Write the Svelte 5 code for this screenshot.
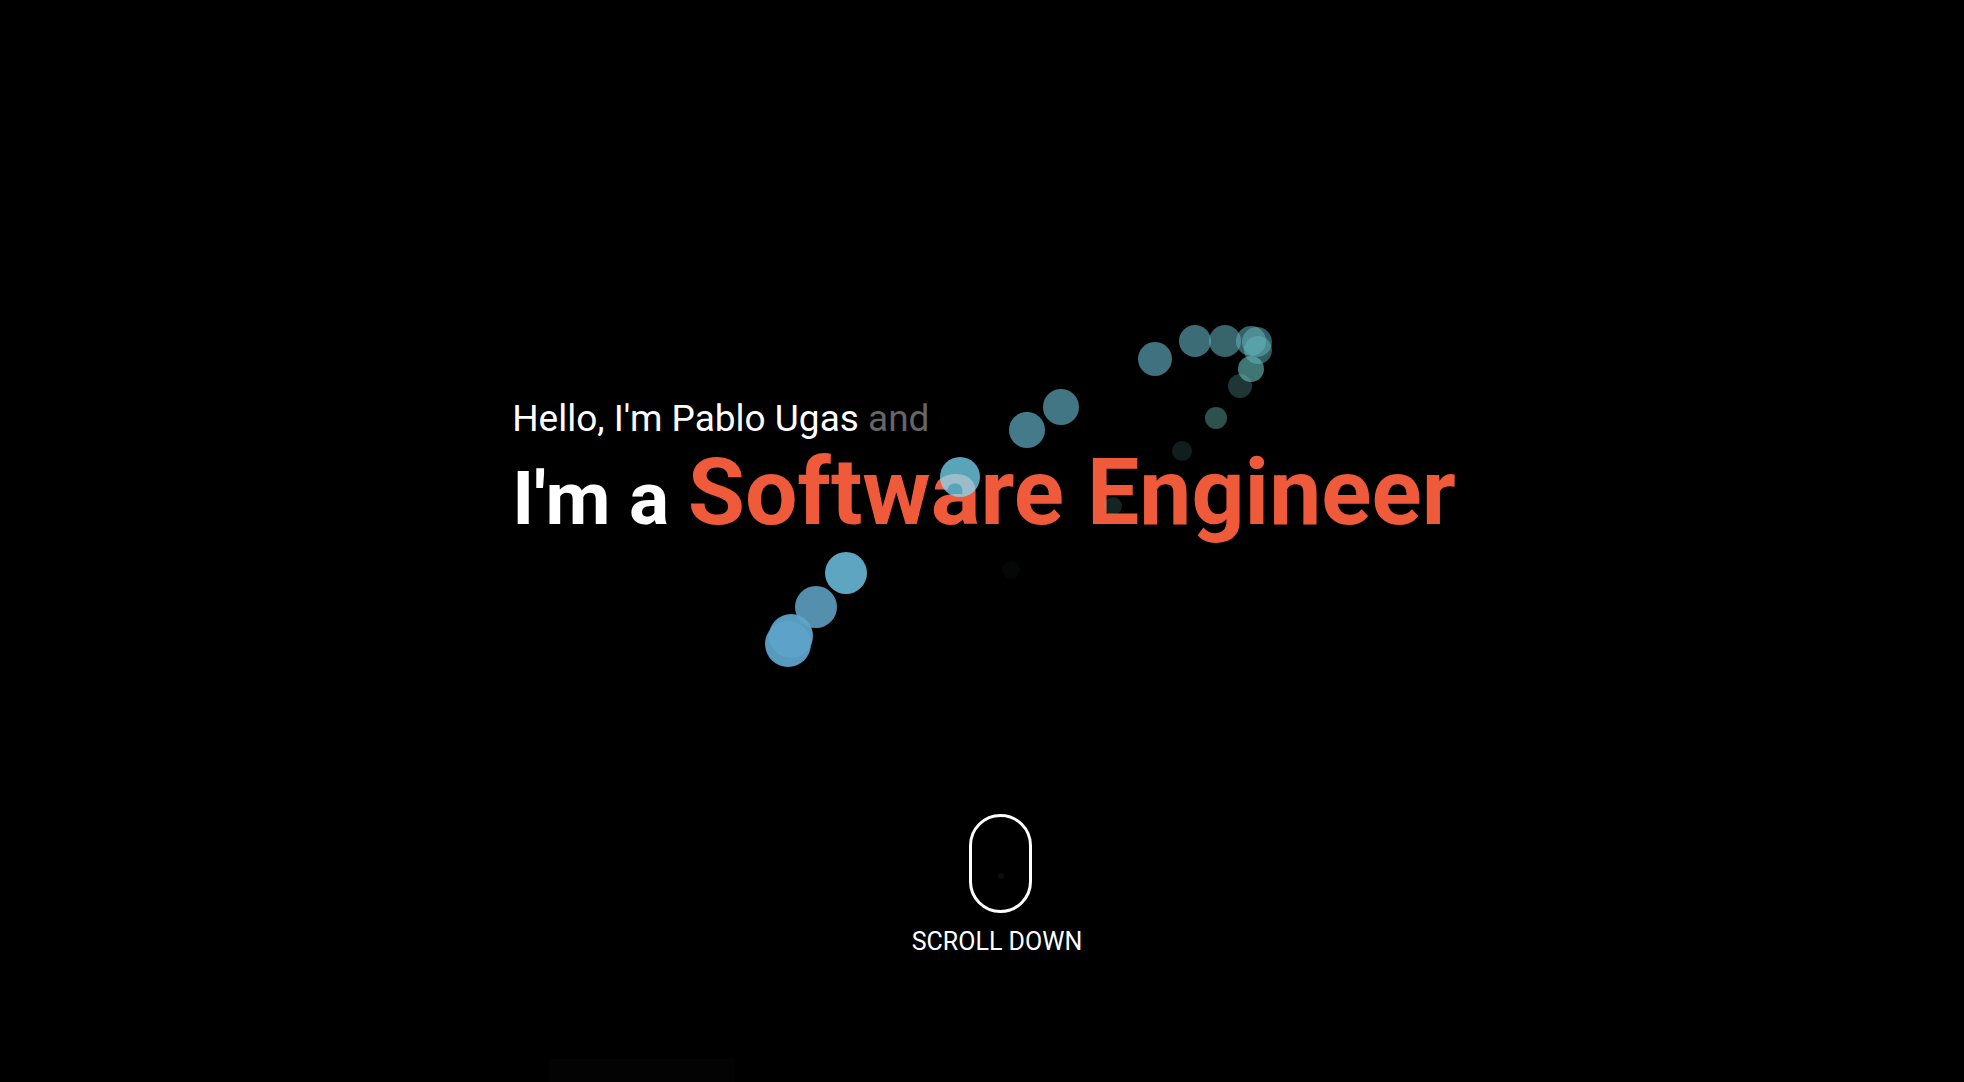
<script>
  const trail = [
    { x: 1011, y: 570, r: 9, color: '#60b09c', alpha: 0.04 },
    { x: 1113, y: 506, r: 9, color: '#62b4a8', alpha: 0.2 },
    { x: 1182, y: 451, r: 10, color: '#64b4b0', alpha: 0.17 },
    { x: 1216, y: 418, r: 11, color: '#64b4b0', alpha: 0.45 },
    { x: 1240, y: 386, r: 12, color: '#64b4b4', alpha: 0.3 },
    { x: 1251, y: 369, r: 13, color: '#64b9b5', alpha: 0.63 },
    { x: 1258, y: 350, r: 14, color: '#64b9be', alpha: 0.5 },
    { x: 1257, y: 342, r: 15, color: '#64b9c1', alpha: 0.5 },
    { x: 1251, y: 341, r: 15, color: '#64b4be', alpha: 0.55 },
    { x: 1225, y: 341, r: 16, color: '#64b2be', alpha: 0.56 },
    { x: 1195, y: 341, r: 16, color: '#64b4c4', alpha: 0.6 },
    { x: 1155, y: 359, r: 17, color: '#64b4c8', alpha: 0.63 },
    { x: 1061, y: 407, r: 18, color: '#66b6cd', alpha: 0.65 },
    { x: 1027, y: 430, r: 18, color: '#66b8cf', alpha: 0.67 },
    { x: 960, y: 477, r: 20, color: '#7be1ff', alpha: 0.73 },
    { x: 846, y: 573, r: 21, color: '#66b5d4', alpha: 0.91 },
    { x: 816, y: 607, r: 21, color: '#66b0d4', alpha: 0.82 },
    { x: 791, y: 636, r: 22, color: '#5fa5ca', alpha: 0.94 },
    { x: 788, y: 644, r: 23, color: '#5ea4ca', alpha: 0.94 }
  ];
</script>

<main>
  <section class="hero">
    <p class="greeting">Hello, I'm Pablo Ugas <span class="muted">and</span></p>
    <h1>I'm a <span class="role">Software Engineer</span></h1>
  </section>
  <a class="scroll" href="#about">
    <span class="mouse"><span class="wheel"></span></span>
    <span class="label">SCROLL DOWN</span>
  </a>
  <div class="next" id="about"></div>
  <svg class="trail" viewBox="0 0 1964 1082" preserveAspectRatio="xMidYMid slice" aria-hidden="true">
    {#each trail as dot}
      <circle cx={dot.x} cy={dot.y} r={dot.r} fill={dot.color} fill-opacity={dot.alpha} />
    {/each}
  </svg>
</main>

<style>
  :global(body) {
    margin: 0;
    background: #000;
  }
  main {
    position: relative;
    box-sizing: border-box;
    min-height: 100vh;
    display: flex;
    flex-direction: column;
    align-items: center;
    padding-top: 397px;
    background: #000;
    color: #fff;
    font-family: Roboto, sans-serif;
    overflow: hidden;
  }
  .hero {
    padding-left: 4px;
  }
  .greeting {
    margin: 0;
    font-size: 37px;
    line-height: 44px;
  }
  .muted {
    color: #666;
  }
  h1 {
    margin: 0;
    font-size: 75px;
    line-height: 104px;
    font-weight: 700;
  }
  .role {
    font-size: 93px;
    color: #ef5b3a;
  }
  .scroll {
    display: flex;
    flex-direction: column;
    align-items: center;
    gap: 15px;
    margin-top: 264px;
    padding-left: 30px;
    color: #fff;
    text-decoration: none;
  }
  .mouse {
    box-sizing: border-box;
    width: 63px;
    height: 99px;
    margin-left: 8px;
    padding-top: 56px;
    border: 3px solid #fff;
    border-radius: 32px;
  }
  .wheel {
    display: block;
    width: 6px;
    height: 6px;
    margin: 0 auto;
    border-radius: 50%;
    background: #0e0e0e;
  }
  .label {
    font-size: 25px;
    line-height: 28px;
  }
  .next {
    width: 186px;
    height: 23px;
    margin-top: auto;
    margin-right: 680px;
    background: #030303;
  }
  .trail {
    position: absolute;
    inset: 0;
    width: 100%;
    height: 100%;
    pointer-events: none;
  }
</style>
